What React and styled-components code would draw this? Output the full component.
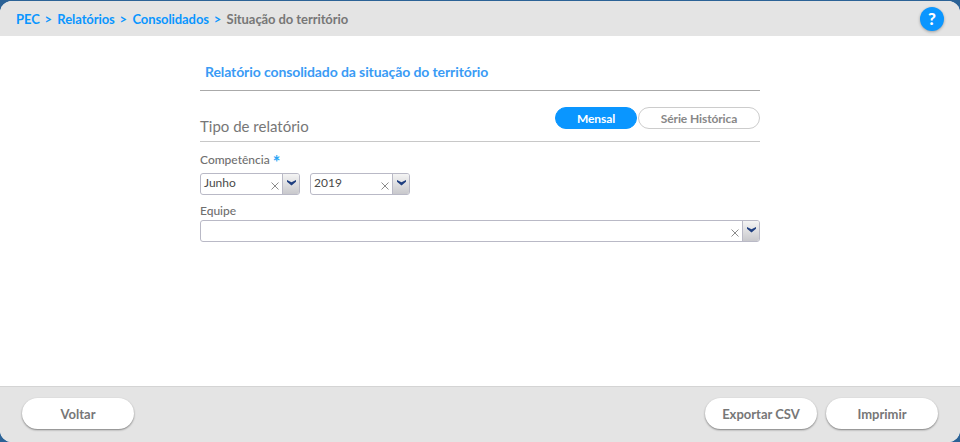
import React from "react";
import styled, { createGlobalStyle } from "styled-components";

const Global = createGlobalStyle`
  html, body { margin: 0; padding: 0; background: #2b6296; }
  body { font-family: Lato, "Open Sans", sans-serif; }
  * { box-sizing: border-box; }
`;
const Shell = styled.div`
  width: 960px; height: 442px; padding-top: 1px; background: #2b6296;
`;
const Window = styled.div`
  height: 441px; display: flex; flex-direction: column; background: #fff;
  border-radius: 12px; overflow: hidden;
`;
const TopBar = styled.header`
  height: 35px; flex: none; background: #e4e4e4; display: flex; align-items: center;
  justify-content: space-between; padding: 0 16px;
`;
const Crumbs = styled.nav`
  display: flex; align-items: center; font-size: 13px; font-weight: 700; color: #0a96ff; letter-spacing: -0.08px;
`;
const Sep = styled.span` margin: 0 5.4px 0 4.8px; font-size: 13px; `;
const Current = styled.span` color: #777; `;
const Help = styled.button`
  width: 24px; height: 24px; border-radius: 50%; border: 0; padding: 0; background: #0a96ff; color: #fff;
  font: 900 17px Lato, sans-serif; box-shadow: 0 1px 3px rgba(0,0,0,.3);
  display: flex; align-items: center; justify-content: center;
`;
const Main = styled.main`
  flex: 1; width: 560px; margin: 0 auto; padding-top: 26px; display: flex; flex-direction: column;
`;
const Title = styled.h1`
  margin: 0; height: 29px; padding: 0 0 0 5px; font-size: 14px; line-height: 20px; font-weight: 700; color: #3a9bf5;
  border-bottom: 1px solid #aaa; letter-spacing: -0.1px;
`;
const SectionHead = styled.div`
  height: 51px; display: flex; justify-content: space-between; align-items: flex-start; padding-top: 16px; border-bottom: 1px solid #c8c8c8;
`;
const SectionTitle = styled.h2`
  margin: 9px 0 0; font-size: 15px; line-height: 20px; font-weight: 400; color: #777;
`;
const Toggle = styled.div` display: flex; gap: 1px; `;
const ToggleBtn = styled.button`
  height: 22px; width: ${p => p.$w}px; border-radius: 11px; padding: 0; font: 700 12px Lato, sans-serif; letter-spacing: -0.1px;
  border: 1px solid ${p => p.$active ? "#0a96ff" : "#ccc"};
  background: ${p => p.$active ? "#0a96ff" : "#fff"};
  color: ${p => p.$active ? "#fff" : "#888"};
`;
const Label = styled.label`
  display: block; font-size: 12px; line-height: 14px; font-weight: 500; color: #6f6f6f;
`;
const Star = styled.span`
  color: #2aa5f5; font-weight: 700; font-size: 18px; line-height: 0; margin-left: 3px; vertical-align: -5px;
`;
const CompLabel = styled(Label)` margin-top: 11px; `;
const EquipeLabel = styled(Label)` margin-top: 9px; `;
const Row = styled.div` display: flex; gap: 10px; margin-top: 6px; `;
const Select = styled.div`
  height: 22px; width: ${p => p.$w}px; margin-top: ${p => p.$mt || 0}px; display: flex; align-items: stretch;
  border: 1px solid #b9b9c6; border-radius: 3px; background: #fff; overflow: hidden;
`;
const Value = styled.span`
  flex: 1; padding-left: 3px; font-size: 12px; line-height: 18px; color: #4a4a4a;
`;
const Clear = styled.span`
  width: 11px; display: flex; align-items: center; justify-content: flex-start; padding-top: 3px;
`;
const Caret = styled.span`
  width: 17px; flex: none; border-left: 1px solid #b9b9c6; display: flex; justify-content: center; padding-top: 6px;
  background: linear-gradient(#f4f4f4, #c8c8cc);
`;
const Footer = styled.footer`
  height: 56px; flex: none; background: #e4e4e4; border-top: 1px solid #d4d4d4; display: flex;
  justify-content: space-between; align-items: flex-start; padding: 11px 22px 0;
`;
const Group = styled.div` display: flex; gap: 9px; `;
const Btn = styled.button`
  width: 112px; height: 31px; border: 0; border-radius: 16px; background: #fff; color: #777; padding: 0;
  font: 700 13px Lato, sans-serif; box-shadow: 0 1px 2px rgba(0,0,0,.45);
`;

const X = () => (
  <svg width="8" height="8" viewBox="0 0 8 8"><path d="M.5.5l7 7M7.5.5l-7 7" stroke="#8c8c8c" strokeWidth="1" fill="none" /></svg>
);
const Chev = () => (
  <svg width="9" height="6" viewBox="0 0 9 6"><path d="M0 0l4.5 2.2L9 0v1.8L4.5 5.5 0 1.8z" fill="#1f3f80" /></svg>
);
const Sel = ({ w, mt, children }) => (
  <Select $w={w} $mt={mt}>
    <Value>{children}</Value>
    <Clear><X /></Clear>
    <Caret><Chev /></Caret>
  </Select>
);

export default function App() {
  return (
    <Shell>
      <Global />
      <Window>
        <TopBar>
          <Crumbs>
            PEC<Sep>&gt;</Sep>Relatórios<Sep>&gt;</Sep>Consolidados<Sep>&gt;</Sep>
            <Current>Situação do território</Current>
          </Crumbs>
          <Help>?</Help>
        </TopBar>
        <Main>
          <Title>Relatório consolidado da situação do território</Title>
          <SectionHead>
            <SectionTitle>Tipo de relatório</SectionTitle>
            <Toggle>
              <ToggleBtn $active $w={82}>Mensal</ToggleBtn>
              <ToggleBtn $w={122}>Série Histórica</ToggleBtn>
            </Toggle>
          </SectionHead>
          <CompLabel>Competência<Star>*</Star></CompLabel>
          <Row>
            <Sel w={100}>Junho</Sel>
            <Sel w={100}>2019</Sel>
          </Row>
          <EquipeLabel>Equipe</EquipeLabel>
          <Sel w={560} mt={2}></Sel>
        </Main>
        <Footer>
          <Btn>Voltar</Btn>
          <Group>
            <Btn>Exportar CSV</Btn>
            <Btn>Imprimir</Btn>
          </Group>
        </Footer>
      </Window>
    </Shell>
  );
}
